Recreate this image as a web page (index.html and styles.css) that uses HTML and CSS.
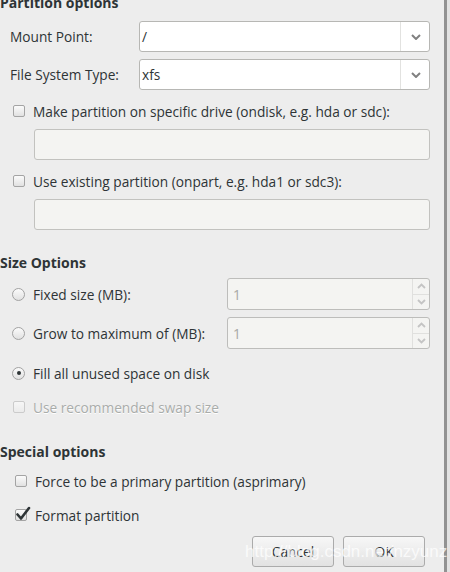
FILE: index.html
```html
<!DOCTYPE html>
<html>
<head>
<meta charset="utf-8">
<link rel="stylesheet" href="styles.css">
</head>
<body>
<div class="screen">
  <div class="dialog">
    <h2 class="section s-partition">Partition options</h2>

    <div class="field-row r-mount">
      <span class="label">Mount Point:</span>
      <div class="combo">
        <span class="combo-text">/</span>
        <span class="combo-btn"><svg width="10" height="6" viewBox="0 0 10 6"><path d="M1 1 L5 5 L9 1" fill="none" stroke="#808080" stroke-width="2"/></svg></span>
      </div>
    </div>

    <div class="field-row r-fs">
      <span class="label">File System Type:</span>
      <div class="combo">
        <span class="combo-text">xfs</span>
        <span class="combo-btn"><svg width="10" height="6" viewBox="0 0 10 6"><path d="M1 1 L5 5 L9 1" fill="none" stroke="#808080" stroke-width="2"/></svg></span>
      </div>
    </div>

    <div class="check-row c-ondisk">
      <span class="checkbox"></span>
      <span>Make partition on specific drive (ondisk, e.g. hda or sdc):</span>
    </div>
    <div class="entry e-ondisk"></div>

    <div class="check-row c-onpart">
      <span class="checkbox"></span>
      <span>Use existing partition (onpart, e.g. hda1 or sdc3):</span>
    </div>
    <div class="entry e-onpart"></div>

    <h2 class="section s-size">Size Options</h2>

    <div class="spin-row sr-fixed">
      <div class="radio-label"><span class="radio"></span><span>Fixed size (MB):</span></div>
      <div class="spin">
        <span class="spin-text">1</span>
        <span class="spin-btns">
          <span class="spin-btn"><svg width="9" height="6" viewBox="0 0 9 6"><path d="M1 5 L4.5 1.5 L8 5" fill="none" stroke="#c4c4c4" stroke-width="1.8"/></svg></span>
          <span class="spin-btn down"><svg width="9" height="6" viewBox="0 0 9 6"><path d="M1 1 L4.5 4.5 L8 1" fill="none" stroke="#c4c4c4" stroke-width="1.8"/></svg></span>
        </span>
      </div>
    </div>

    <div class="spin-row sr-grow">
      <div class="radio-label"><span class="radio"></span><span>Grow to maximum of (MB):</span></div>
      <div class="spin">
        <span class="spin-text">1</span>
        <span class="spin-btns">
          <span class="spin-btn"><svg width="9" height="6" viewBox="0 0 9 6"><path d="M1 5 L4.5 1.5 L8 5" fill="none" stroke="#c4c4c4" stroke-width="1.8"/></svg></span>
          <span class="spin-btn down"><svg width="9" height="6" viewBox="0 0 9 6"><path d="M1 1 L4.5 4.5 L8 1" fill="none" stroke="#c4c4c4" stroke-width="1.8"/></svg></span>
        </span>
      </div>
    </div>

    <div class="radio-label r-fill">
      <span class="radio checked"></span><span>Fill all unused space on disk</span>
    </div>

    <div class="check-row c-swap disabled">
      <span class="checkbox"></span>
      <span>Use recommended swap size</span>
    </div>

    <h2 class="section s-special">Special options</h2>

    <div class="check-row c-primary">
      <span class="checkbox"></span>
      <span>Force to be a primary partition (asprimary)</span>
    </div>

    <div class="check-row c-format">
      <span class="checkbox checked"><svg class="tick" width="16" height="15" viewBox="0 0 16 15"><path d="M2.5 8.5 L6 12.5 L14 2" fill="none" stroke="#2e3436" stroke-width="2.6" stroke-linecap="round" stroke-linejoin="round"/></svg></span>
      <span>Format partition</span>
    </div>

    <div class="buttons">
      <button class="btn">Cancel</button>
      <button class="btn">OK</button>
    </div>
  </div>
  <div class="frame-edge"></div>
  <div class="behind"></div>
</div>
<div class="watermark">http://blog.csdn.net/nzyunz</div>
</body>
</html>
```

FILE: styles.css
```css
* { box-sizing: border-box; }

html, body {
  margin: 0;
  padding: 0;
}

body {
  background: #ededed;
  font-family: "Open Sans", "Noto Sans", sans-serif;
  font-size: 13.7px;
  color: #2e3436;
  width: 450px;
  height: 572px;
  overflow: hidden;
  position: relative;
}

.screen {
  display: flex;
  height: 572px;
  overflow: hidden;
}

.dialog {
  width: 444px;
  flex: none;
  display: flow-root;
}

.frame-edge {
  width: 3px;
  flex: none;
  background: #929292;
}

.behind {
  flex: 1;
  background: #e2e2e2;
}

.section {
  margin: 0;
  font-size: 14px;
  font-weight: 700;
  line-height: 16px;
  height: 16px;
  white-space: nowrap;
}

.s-partition { margin-top: -5px; }
.s-size { margin-top: 25px; }
.s-special { margin-top: 27px; }

.field-row {
  display: grid;
  grid-template-columns: 129px 291px;
  align-items: center;
  padding-left: 10px;
  height: 31px;
}

.r-mount { margin-top: 10px; }
.r-fs { margin-top: 7px; }

.label { white-space: nowrap; }

.combo {
  display: flex;
  height: 31px;
  border: 1px solid #b7b7b4;
  border-radius: 3px;
  background: #ffffff;
  align-items: center;
}

.combo-text {
  flex: 1;
  padding-left: 2px;
}

.combo-btn {
  width: 29px;
  height: 100%;
  border-left: 1px solid #e2e2e0;
  display: flex;
  align-items: center;
  justify-content: center;
  padding-left: 1px;
}

.check-row {
  display: flex;
  align-items: center;
  height: 20px;
  padding-left: 13px;
  gap: 8px;
  white-space: nowrap;
}

.c-ondisk { margin-top: 11px; }
.c-onpart { margin-top: 11px; }
.c-swap { margin-top: 14px; }
.c-primary { margin-top: 11px; padding-left: 15px; }
.c-format { margin-top: 14px; padding-left: 15px; }

.checkbox {
  width: 12px;
  height: 12px;
  flex: none;
  border: 1px solid #a4a4a4;
  border-radius: 2px;
  background: linear-gradient(#fbfbfb, #e1e1e1);
  position: relative;
}

.checkbox .tick {
  position: absolute;
  left: -1px;
  top: -4px;
}

.disabled { color: #a9acaa; text-shadow: 0 1px #ffffff; }
.disabled .checkbox {
  border-color: #cbcbcb;
  background: linear-gradient(#f6f6f6, #ebebeb);
}

.entry {
  margin-left: 34px;
  width: 396px;
  height: 31px;
  border: 1px solid #c2c2bf;
  border-radius: 3px;
  background: #f4f4f2;
}

.e-ondisk { margin-top: 8px; }
.e-onpart { margin-top: 8px; }

.radio-label {
  display: flex;
  align-items: center;
  gap: 8px;
  padding-left: 12px;
  white-space: nowrap;
}

.radio {
  width: 13px;
  height: 13px;
  flex: none;
  border: 1px solid #a2a2a2;
  border-radius: 50%;
  background: linear-gradient(#fbfbfb, #e1e1e1);
  display: flex;
  align-items: center;
  justify-content: center;
}

.radio.checked::after {
  content: "";
  width: 4px;
  height: 4px;
  border-radius: 50%;
  background: #2e3436;
}

.spin-row {
  display: grid;
  grid-template-columns: 227px 203px;
  align-items: center;
  height: 32px;
}

.sr-fixed { margin-top: 7px; }
.sr-grow { margin-top: 7px; }

.spin {
  display: flex;
  height: 32px;
  border: 1px solid #bdbdbb;
  border-radius: 3px;
  background: #f4f4f2;
}

.spin-text {
  flex: 1;
  color: #a8a8a6;
  padding-left: 5px;
  display: flex;
  align-items: center;
}

.spin-btns {
  width: 17px;
  display: flex;
  flex-direction: column;
  border-left: 1px solid #e0e0de;
}

.spin-btn {
  flex: 1;
  display: flex;
  align-items: center;
  justify-content: center;
}

.spin-btn.down { border-top: 1px solid #e0e0de; }

.r-fill {
  margin-top: 14px;
  height: 20px;
}

.buttons {
  display: flex;
  justify-content: flex-end;
  gap: 9px;
  padding-right: 19px;
  margin-top: 11px;
}

.btn {
  width: 82px;
  height: 31px;
  border: 1px solid #ababab;
  border-radius: 3px;
  background: linear-gradient(#f7f7f7, #e2e2e2);
  font-family: "Open Sans", "Noto Sans", sans-serif;
  font-size: 13.7px;
  color: #2e3436;
  padding: 0;
}

.watermark {
  position: absolute;
  left: 245px;
  top: 542px;
  font-family: "Liberation Sans", sans-serif;
  font-size: 17px;
  color: rgba(255, 255, 255, 0.75);
  white-space: nowrap;
}
```
